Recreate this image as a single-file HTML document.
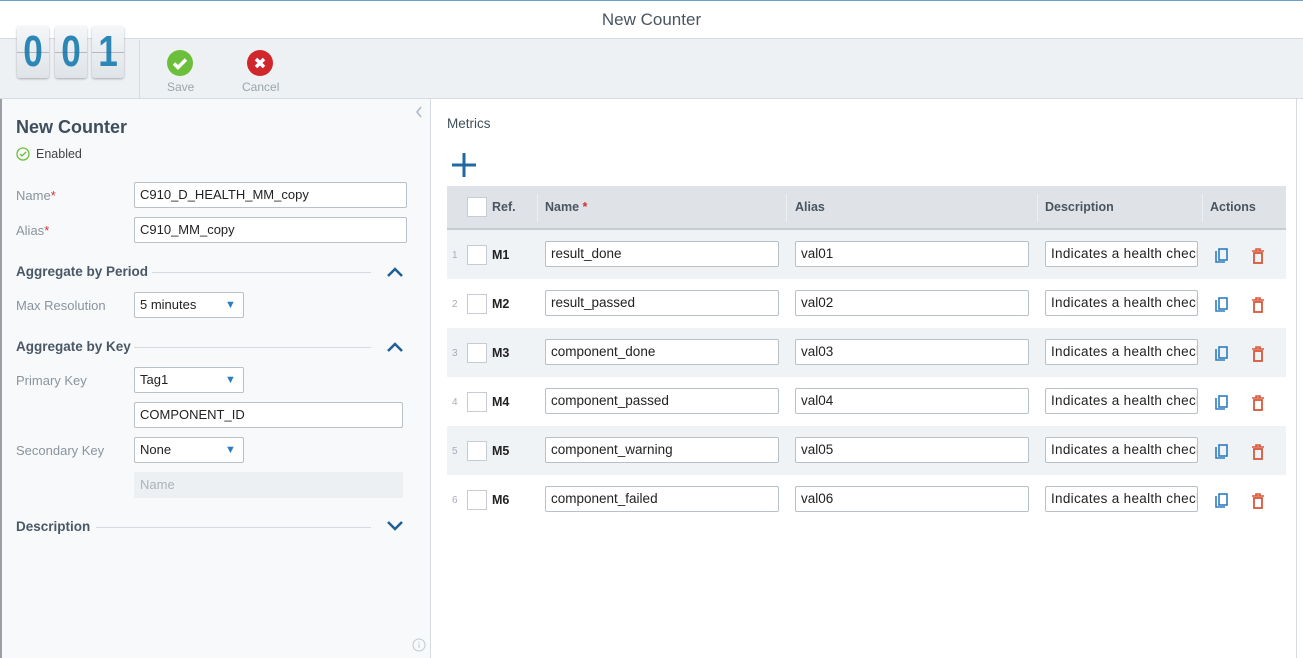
<!DOCTYPE html>
<html><head><style>
*{box-sizing:border-box;margin:0;padding:0}
body{width:1303px;height:658px;position:relative;overflow:hidden;font-family:"Liberation Sans",sans-serif;background:#fff;color:#333}
.abs{position:absolute}
.title{left:0;top:0;width:1303px;height:39px;border-top:1px solid #6aa0c8;border-bottom:1px solid #d5dbe0;text-align:center;font-size:17px;color:#4a5560;line-height:38px}
.tb{left:0;top:39px;width:1303px;height:60px;background:#eef1f4;border-bottom:1px solid #d5dbe0}
.digit{top:26px;width:32px;height:52px;background:linear-gradient(#f4f6f8,#dfe4e8);border-radius:3px;box-shadow:0 1px 2px rgba(0,0,0,.3);overflow:hidden}
.digit span{display:block;font-size:44px;font-weight:bold;color:#2c86b6;text-align:center;line-height:52px;transform:scaleX(0.8)}
.digit:after{content:"";position:absolute;left:0;right:0;top:26px;height:1px;background:rgba(80,90,100,.35)}
.left{left:0;top:99px;width:431px;height:559px;background:#f7f9fb;border-right:1px solid #d5dbe0;border-left:2px solid #9aa0a6}
.lbl{font-size:13px;color:#8a949d}
.inp{background:#fff;border:1px solid #b8c0c8;border-radius:2px;font-size:13px;color:#222;padding-left:5px;line-height:24px;height:26px}
.sec{font-size:13.5px;font-weight:bold;color:#4a5866}
.line{height:1px;background:#d5dbe0}
.hdr{left:447px;top:186px;width:839px;height:44px;background:#dfe3e7;border-bottom:2px solid #c6ccd2;font-size:12.5px;font-weight:bold;color:#4a5560}
.hdr span{position:absolute;top:14px}
.div{position:absolute;top:8px;width:1px;height:28px;background:#eef1f4}
.cb{width:20px;height:20px;background:#fff;border:1px solid #c6ccd2}
.row{left:447px;width:839px;height:49px}
.row .n{position:absolute;left:5px;top:20px;font-size:10px;color:#aab}
.row .cb{position:absolute;left:20px;top:15px}
.row .m{position:absolute;left:45px;top:18px;font-size:12.5px;font-weight:bold;color:#222}
.row .inp{position:absolute;top:11px;overflow:hidden;white-space:nowrap;font-size:13.5px}
</style></head><body>
<div class="abs title">New Counter</div>
<div class="abs tb"></div>
<div class="abs digit" style="left:17px"><span>0</span></div>
<div class="abs digit" style="left:55px"><span>0</span></div>
<div class="abs digit" style="left:92px"><span>1</span></div>
<div class="abs" style="left:139px;top:40px;width:1px;height:58px;background:#d5dbe0"></div>
<svg class="abs" style="left:167px;top:50px" width="26" height="26"><circle cx="13" cy="13" r="13" fill="#6cbf3a"/><path d="M7 13.5l4 4 8-8" stroke="#fff" stroke-width="3.5" fill="none"/></svg>
<div class="abs" style="left:167px;top:80px;font-size:12px;color:#9aa4ad">Save</div>
<svg class="abs" style="left:247px;top:50px" width="26" height="26"><circle cx="13" cy="13" r="13" fill="#d0272d"/><path d="M9 9l8 8M17 9l-8 8" stroke="#fff" stroke-width="3.5"/></svg>
<div class="abs" style="left:242px;top:80px;font-size:12px;color:#9aa4ad">Cancel</div>

<div class="abs left"></div>
<svg class="abs" style="left:415px;top:106px" width="8" height="12"><path d="M6 1L2 6l4 5" stroke="#a8b8c8" stroke-width="1.5" fill="none"/></svg>
<div class="abs" style="left:16px;top:117px;font-size:18px;font-weight:bold;color:#3e4e5c">New Counter</div>
<svg class="abs" style="left:16px;top:147px" width="14" height="14"><circle cx="7" cy="7" r="6" stroke="#6cbf3a" stroke-width="1.3" fill="none"/><path d="M4 7l2 2 4-4" stroke="#6cbf3a" stroke-width="1.3" fill="none"/></svg>
<div class="abs" style="left:36px;top:147px;font-size:12.5px;color:#444">Enabled</div>
<div class="abs lbl" style="left:16px;top:188px">Name<span style="color:#c33">*</span></div>
<div class="abs inp" style="left:134px;top:182px;width:273px">C910_D_HEALTH_MM_copy</div>
<div class="abs lbl" style="left:16px;top:223px">Alias<span style="color:#c33">*</span></div>
<div class="abs inp" style="left:134px;top:217px;width:273px">C910_MM_copy</div>
<div class="abs sec" style="left:16px;top:264px">Aggregate by Period</div>
<div class="abs line" style="left:152px;top:272px;width:219px"></div>
<svg class="abs" style="left:386px;top:266px" width="18" height="12"><path d="M2 10l7-7 7 7" stroke="#1f5f96" stroke-width="2.5" fill="none"/></svg>
<div class="abs lbl" style="left:16px;top:298px">Max Resolution</div>
<div class="abs inp" style="left:134px;top:292px;width:110px">5 minutes<span style="position:absolute;left:90px;color:#2d7dc0;font-size:11px">&#9660;</span></div>
<div class="abs sec" style="left:16px;top:339px">Aggregate by Key</div>
<div class="abs line" style="left:134px;top:347px;width:237px"></div>
<svg class="abs" style="left:386px;top:341px" width="18" height="12"><path d="M2 10l7-7 7 7" stroke="#1f5f96" stroke-width="2.5" fill="none"/></svg>
<div class="abs lbl" style="left:16px;top:373px">Primary Key</div>
<div class="abs inp" style="left:134px;top:367px;width:110px">Tag1<span style="position:absolute;left:90px;color:#2d7dc0;font-size:11px">&#9660;</span></div>
<div class="abs inp" style="left:134px;top:402px;width:269px">COMPONENT_ID</div>
<div class="abs lbl" style="left:16px;top:443px">Secondary Key</div>
<div class="abs inp" style="left:134px;top:437px;width:110px">None<span style="position:absolute;left:90px;color:#2d7dc0;font-size:11px">&#9660;</span></div>
<div class="abs" style="left:134px;top:472px;width:269px;height:26px;background:#edf0f2;font-size:13px;color:#aab3bb;padding-left:6px;line-height:26px">Name</div>
<div class="abs sec" style="left:16px;top:519px">Description</div>
<div class="abs line" style="left:96px;top:527px;width:275px"></div>
<svg class="abs" style="left:386px;top:520px" width="18" height="12"><path d="M2 2l7 7 7-7" stroke="#1f5f96" stroke-width="2.5" fill="none"/></svg>
<svg class="abs" style="left:412px;top:638px" width="14" height="14"><circle cx="7" cy="7" r="6" stroke="#c0c8d0" fill="none"/><path d="M7 6v4M7 4v1" stroke="#c0c8d0"/></svg>

<div class="abs" style="left:1296px;top:99px;width:1px;height:559px;background:#d5dbe0"></div>
<div class="abs" style="left:447px;top:116px;font-size:13.5px;color:#3e4e5c">Metrics</div>
<svg class="abs" style="left:451px;top:152px" width="26" height="26"><path d="M13 1v24M1 13h24" stroke="#1f6aa5" stroke-width="3"/></svg>
<div class="abs hdr">
<div class="cb" style="position:absolute;left:20px;top:11px"></div>
<span style="left:45px">Ref.</span><div class="div" style="left:90px"></div>
<span style="left:98px">Name <b style="color:#c33">*</b></span><div class="div" style="left:339px"></div>
<span style="left:348px">Alias</span><div class="div" style="left:590px"></div>
<span style="left:598px">Description</span><div class="div" style="left:755px"></div>
<span style="left:763px">Actions</span>
</div>
<div id="rows"></div>
<script>
var names=["result_done","result_passed","component_done","component_passed","component_warning","component_failed"];
var h="";
for(var i=0;i<6;i++){
var t=230+i*49;var bg=i%2==0?"#f0f3f6":"#fff";
h+='<div class="abs row" style="top:'+t+'px;background:'+bg+'"><span class="n">'+(i+1)+'</span><div class="cb"></div><span class="m">M'+(i+1)+'</span>'+
'<div class="inp" style="left:98px;width:234px">'+names[i]+'</div>'+
'<div class="inp" style="left:348px;width:234px">val0'+(i+1)+'</div>'+
'<div class="inp" style="left:598px;width:153px;letter-spacing:0.3px">Indicates a health check</div>'+
'<svg style="position:absolute;left:768px;top:18px" width="14" height="16"><path d="M1 3v11h9" stroke="#2d7dc0" stroke-width="1.6" fill="none"/><rect x="4" y="1" width="8" height="11" stroke="#2d7dc0" stroke-width="1.6" fill="none"/></svg>'+
'<svg style="position:absolute;left:804px;top:18px" width="14" height="16"><path d="M1 3h12M5 3V1h4v2" stroke="#d9573a" stroke-width="1.6" fill="none"/><rect x="3" y="5" width="8" height="10" stroke="#d9573a" stroke-width="1.8" fill="none"/></svg></div>';
}
document.getElementById("rows").innerHTML=h;
</script>
</body></html>
